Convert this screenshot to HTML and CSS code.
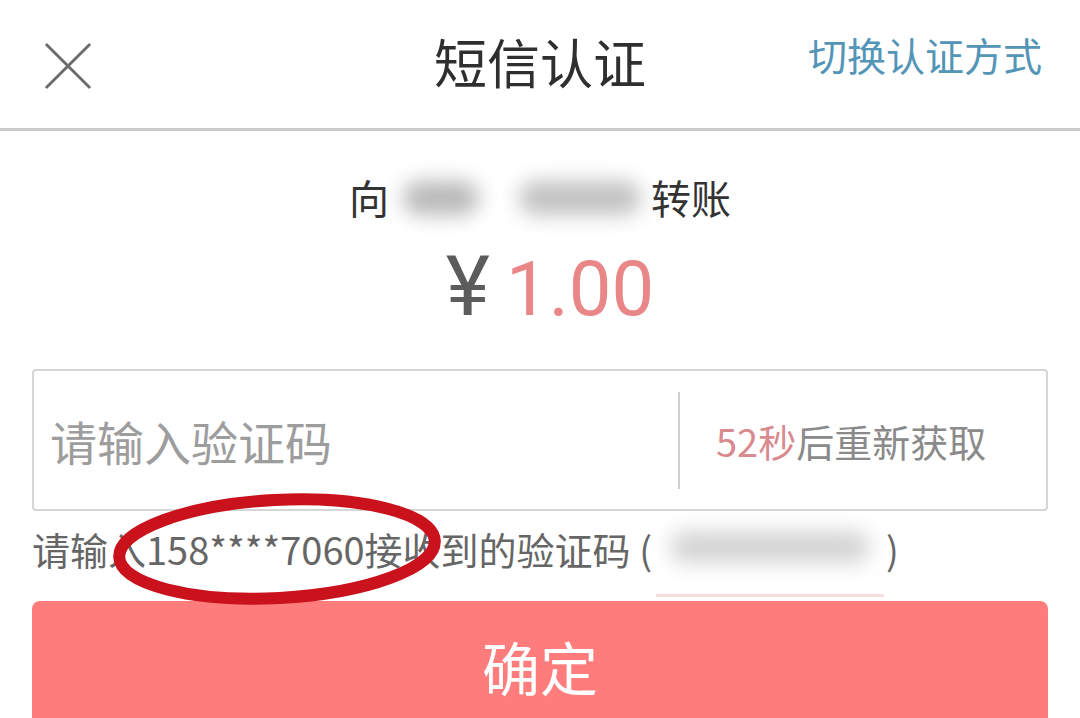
FILE: index.html
```html
<!DOCTYPE html>
<html lang="zh-CN">
<head>
  <meta charset="UTF-8" />
  <title>短信认证</title>
  <link rel="stylesheet" href="styles.css">
</head>
<body>

<div class="header">
  <div class="close">
    <svg width="50" height="50" viewBox="0 0 50 50">
      <path d="M2 2 L48 48 M48 2 L2 48" stroke="#6b6b6b" stroke-width="3" fill="none"/>
    </svg>
  </div>
  <div class="title">短信认证</div>
  <div class="switch">切换认证方式</div>
</div>

<div class="main">
  <div class="payee">向<span class="blur-name"><i class="blob b1"></i><i class="blob b2"></i></span>转账</div>

  <div class="amount"><span class="yen">¥</span><span class="num">1.00</span></div>

  <div class="code-box">
    <div class="code-input">请输入验证码</div>
    <div class="divider"></div>
    <div class="resend"><span class="count">52秒</span>后重新获取</div>
  </div>

  <div class="hint">
    请输入158****7060接收到的验证码 (<span class="blur-code"><i class="blob b3"></i></span>)
    <svg class="circle" width="340" height="120" viewBox="0 0 340 120">
      <ellipse cx="170" cy="60" rx="158" ry="49" transform="rotate(-3 170 60)" fill="none" stroke="#c9121c" stroke-width="12"/>
    </svg>
  </div>

  <button class="confirm">确定</button>
</div>

</body>
</html>
```

FILE: styles.css
```css
body {
  margin: 0;
  width: 1080px;
  height: 718px;
  overflow: hidden;
  background: #fff;
  font-family: "Noto Sans CJK SC", "Noto Sans", sans-serif;
  color: #333;
}

.header {
  display: grid;
  grid-template-columns: 1fr auto 1fr;
  align-items: center;
  height: 128px;
  border-bottom: 3px solid #cbcbcb;
}

.close {
  padding-left: 44px;
  padding-top: 4px;
}

.close svg {
  display: block;
  width: 48px;
  height: 48px;
}

.title {
  font-size: 53px;
  color: #2f2f2f;
  margin-top: -6px;
}

.switch {
  justify-self: end;
  padding-right: 38px;
  font-size: 39px;
  color: #5395b7;
  margin-top: -20px;
}

.main {
  padding: 0 32px;
}

.payee {
  margin-top: 38px;
  text-align: center;
  font-size: 40px;
  line-height: 56px;
  color: #333;
}

.blur-name {
  display: inline-block;
  position: relative;
  width: 262px;
  height: 56px;
  vertical-align: top;
}

.blob {
  position: absolute;
  border-radius: 30px;
  background: #b9b9b9;
  filter: blur(10px);
}

.b1 { left: 14px; top: 12px; width: 76px; height: 34px; }
.b2 { left: 130px; top: 12px; width: 122px; height: 34px; background: #c2c2c2; }
.b3 { left: 14px; top: 20px; width: 200px; height: 32px; background: #d4d4d4; }

.amount {
  margin-top: 22px;
  height: 80px;
  padding-left: 20px;
  text-align: center;
  line-height: 80px;
  font-family: Roboto, "Noto Sans", sans-serif;
}

.yen {
  font-size: 84px;
  color: #5c5c5c;
  margin-right: 16px;
}

.num {
  font-size: 76px;
  color: #e98688;
}

.code-box {
  display: flex;
  align-items: center;
  margin-top: 42px;
  height: 138px;
  border: 2px solid #d6d6d6;
  border-radius: 4px;
}

.code-input {
  flex: 1;
  padding-left: 16px;
  font-size: 47px;
  color: #9d9d9d;
}

.divider {
  width: 2px;
  height: 97px;
  background: #cfcfcf;
}

.resend {
  width: 366px;
  padding-left: 36px;
  box-sizing: border-box;
  font-size: 38px;
  color: #8a8a8a;
}

.count {
  color: #d98a8f;
}

.hint {
  position: relative;
  margin-top: 12px;
  font-size: 38px;
  line-height: 52px;
  color: #666;
  white-space: nowrap;
}

.blur-code {
  display: inline-block;
  position: relative;
  width: 228px;
  height: 86px;
  margin: -12px 2px -22px 4px;
  vertical-align: top;
  border-bottom: 3px solid #f6dede;
  box-sizing: border-box;
}

.circle {
  position: absolute;
  left: 75px;
  top: -34px;
}

.confirm {
  display: block;
  width: 100%;
  height: 130px;
  margin-top: 26px;
  border: none;
  border-radius: 8px;
  background: #fe7c7c;
  color: #fff;
  font-family: "Noto Sans CJK SC", sans-serif;
  font-size: 58px;
}
```
